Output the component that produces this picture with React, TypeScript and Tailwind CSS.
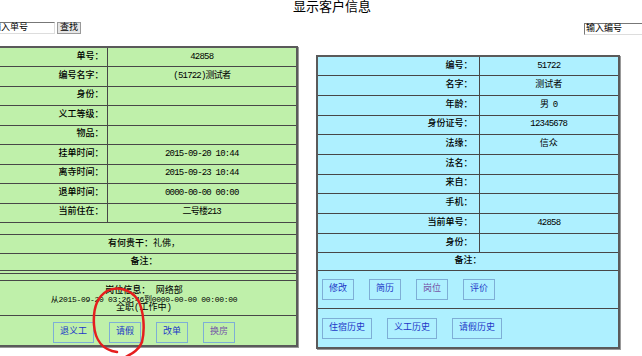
import React from 'react';

const leftRows: [string, string][] = [
  ['单号：', '42858'],
  ['编号名字：', '(51722)测试者'],
  ['身份：', ''],
  ['义工等级：', ''],
  ['物品：', ''],
  ['挂单时间：', '2015-09-20 10:44'],
  ['离寺时间：', '2015-09-23 10:44'],
  ['退单时间：', '0000-00-00 00:00'],
  ['当前住在：', '二号楼213'],
];

const rightRows: [string, string][] = [
  ['编号：', '51722'],
  ['名字：', '测试者'],
  ['年龄：', '男 0'],
  ['身份证号：', '12345678'],
  ['法缘：', '信众'],
  ['法名：', ''],
  ['来自：', ''],
  ['手机：', ''],
  ['当前单号：', '42858'],
  ['身份：', ''],
];

const Btn = ({ label, visited }: { label: string; visited?: boolean }) => (
  <span
    className={`inline-flex items-center justify-center h-[21px] px-[6px] border border-[#7eaed6] text-[9px] leading-none ${
      visited ? 'text-[#7656a8]' : 'text-[#2238c8]'
    }`}
  >
    {label}
  </span>
);

const cell = 'border border-[#474747] p-0 leading-none';

export default function App() {
  return (
    <div className="relative w-[642px] h-[356px] overflow-hidden bg-white text-black text-[9px] font-['Liberation_Mono','Noto_Sans_CJK_SC',monospace]">
      {/* title */}
      <div className="text-center text-[13px] leading-none -mt-[1px] h-[12px] font-['Noto_Sans_CJK_SC',sans-serif] pl-[22px]">
        显示客户信息
      </div>

      {/* search bars */}
      <div className="flex justify-between items-center mt-[11px] h-[12px]">
        <div className="flex items-center -ml-[10px] gap-[2px]">
          <div className="w-[65px] h-[12px] border border-t-[#777] border-l-[#777] border-r-[#ddd] border-b-[#ddd] bg-white leading-[10px] pl-[1px]">
            输入单号
          </div>
          <div className="h-[12px] px-[2px] border border-[#999] bg-[#e6e6e6] leading-[10px]">查找</div>
        </div>
        <div className="w-[70px] h-[12px] -mr-[12px] mt-[2px] border border-t-[#777] border-l-[#777] border-r-[#ddd] border-b-[#ddd] bg-white leading-[10px] pl-[1px]">
          输入编号
        </div>
      </div>

      <div className="flex items-start mt-[12px]">
        {/* left panel */}
        <table className="-ml-[10px] w-[308px] border-collapse bg-[#bff0aa] border-2 border-[#5a5a5a] shadow-[1px_1px_0_#999]">
          <tbody>
            {leftRows.map(([k, v]) => (
              <tr key={k} className="h-[19.5px]">
                <td className={`${cell} w-[116px] text-right pr-[3px] font-medium`}>{k}</td>
                <td className={`${cell} text-center ${/[0-9]/.test(v) ? 'tracking-[-0.8px]' : ''}`}>{v}</td>
              </tr>
            ))}
            <tr className="h-[12px]">
              <td colSpan={2} className={cell}></td>
            </tr>
            <tr className="h-[19px]">
              <td colSpan={2} className={`${cell} text-center`}>
                <span className="font-medium">有何贵干：</span>礼佛，
              </td>
            </tr>
            <tr className="h-[17px]">
              <td colSpan={2} className={`${cell} text-center font-medium`}>备注：</td>
            </tr>
            <tr className="h-[3px]">
              <td colSpan={2} className={cell}></td>
            </tr>
            <tr className="h-[7px]">
              <td colSpan={2} className={cell}></td>
            </tr>
            <tr className="h-[35px]">
              <td colSpan={2} className={`${cell} text-center leading-[9px] pt-[3px]`}>
                <div>
                  <span className="font-medium">岗位信息：</span> 网络部
                </div>
                <div className="text-[8px] tracking-[-0.3px]">从2015-09-20 03:26:46到0000-00-00 00:00:00</div>
                <div>全职(工作中)</div>
              </td>
            </tr>
            <tr className="h-[30px]">
              <td colSpan={2} className={cell}>
                <div className="flex justify-center gap-[15px] pt-[5px]">
                  <Btn label="退义工" />
                  <Btn label="请假" />
                  <Btn label="改单" />
                  <Btn label="换房" visited />
                </div>
              </td>
            </tr>
          </tbody>
        </table>

        {/* right panel */}
        <table className="ml-[18px] mt-[9px] w-[304px] border-collapse bg-[#aef0ff] border-2 border-[#5a5a5a] shadow-[1px_1px_0_#999]">
          <tbody>
            {rightRows.map(([k, v]) => (
              <tr key={k} className="h-[19.7px]">
                <td className={`${cell} w-[162px] text-right pr-[6px] font-medium`}>{k}</td>
                <td className={`${cell} text-center ${/[0-9]/.test(v) ? 'tracking-[-0.8px]' : ''}`}>{v}</td>
              </tr>
            ))}
            <tr className="h-[18px]">
              <td colSpan={2} className={`${cell} text-center font-medium`}>备注：</td>
            </tr>
            <tr className="h-[38px]">
              <td colSpan={2} className={cell}>
                <div className="flex gap-[15px] pl-[4px]">
                  <Btn label="修改" />
                  <Btn label="简历" />
                  <Btn label="岗位" visited />
                  <Btn label="评价" />
                </div>
              </td>
            </tr>
            <tr className="h-[39px]">
              <td colSpan={2} className={cell}>
                <div className="flex gap-[15px] pl-[4px]">
                  <Btn label="住宿历史" />
                  <Btn label="义工历史" />
                  <Btn label="请假历史" />
                </div>
              </td>
            </tr>
          </tbody>
        </table>
      </div>

      {/* red hand-drawn annotation around 请假 */}
      <svg className="absolute left-0 top-0 pointer-events-none" width="642" height="356">
        <path
          d="M117 352 C103 350 95 340 94 325 C93 310 97 297 107 291 C117 286 131 289 138 300 C144 311 145 330 142 342 C139 350 133 353 124 358"
          fill="none"
          stroke="#e51e1e"
          strokeWidth="2.5"
          strokeLinecap="round"
        />
      </svg>
    </div>
  );
}
